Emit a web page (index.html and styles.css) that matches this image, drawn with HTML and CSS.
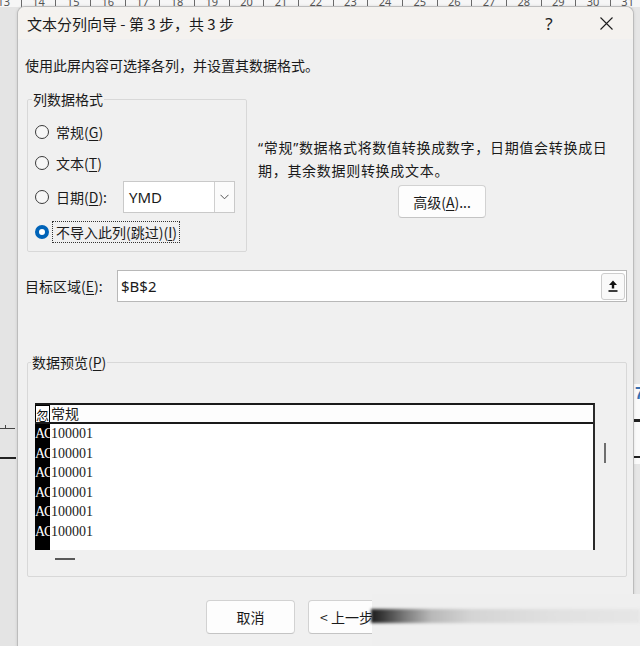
FILE: index.html
```html
<!DOCTYPE html>
<html lang="zh-CN">
<head>
<meta charset="utf-8">
<title>文本分列向导</title>
<link rel="stylesheet" href="styles.css">
</head>
<body>
<div class="ruler">
  <span>13</span><span>14</span><span>15</span><span>16</span><span>17</span><span>18</span><span>19</span><span>20</span><span>21</span><span>22</span><span>23</span><span>24</span><span>25</span><span>26</span><span>27</span><span>28</span><span>29</span><span>30</span><span>31</span>
</div>

<div class="left-strip">
  <div class="ls-tick"></div>
  <div class="ls-line"></div>
</div>
<div class="right-strip">
  <span class="rs-seven">7</span>
  <div class="rs-line"></div>
  <div class="rs-line rs-line2"></div>
</div>

<div class="dialog">
  <div class="titlebar">
    <span class="title">文本分列向导 - 第 3 步，共 3 步</span>
    <span class="help">?</span>
    <span class="close">
      <svg width="13" height="13" viewBox="0 0 13 13"><path d="M0.5 0.5 L12.5 12.5 M12.5 0.5 L0.5 12.5" stroke="#1e1e1e" stroke-width="1.1" fill="none"/></svg>
    </span>
  </div>

  <div class="content">
    <p class="intro">使用此屏内容可选择各列，并设置其数据格式。</p>

    <div class="format-row">
      <fieldset class="group fmt">
        <legend>列数据格式</legend>
        <div class="opts">
          <div class="opt opt1"><span class="radio"></span><span>常规(<u>G</u>)</span></div>
          <div class="opt opt2"><span class="radio"></span><span>文本(<u>T</u>)</span></div>
          <div class="opt opt3"><span class="radio"></span><span class="lbl-date">日期(<u>D</u>):</span>
            <div class="combo">
              <span class="combo-val">YMD</span>
              <span class="combo-btn"><svg width="9" height="6" viewBox="0 0 9 6"><path d="M0.5 0.8 L4.5 4.8 L8.5 0.8" stroke="#555" stroke-width="1" fill="none"/></svg></span>
            </div>
          </div>
          <div class="opt opt4"><span class="radio on"></span><span class="focus">不导入此列(跳过)(<u>I</u>)</span></div>
        </div>
      </fieldset>

      <div class="desc">
        <p><span class="q">“</span>常规<span class="q">”</span>数据格式将数值转换成数字，日期值会转换成日<br>期，其余数据则转换成文本。</p>
        <button class="btn btn-adv">高级(<u>A</u>)...</button>
      </div>
    </div>

    <div class="target">
      <span class="target-lbl">目标区域(<u>E</u>):</span>
      <div class="input">
        <span class="input-val">$B$2</span>
        <span class="collapse">
          <svg width="10" height="13" viewBox="0 0 10 13"><path d="M5 0.5 L9 5 L6.2 5 L6.2 8.5 L3.8 8.5 L3.8 5 L1 5 Z" fill="#111"/><rect x="0.5" y="10.2" width="9" height="1.6" fill="#111"/></svg>
        </span>
      </div>
    </div>

    <fieldset class="group preview">
      <legend>数据预览(<u>P</u>)</legend>
      <div class="pv">
        <div class="pv-main">
          <div class="table">
            <div class="thead"><span class="c1 c1h">忽</span><span class="c2">常规</span></div>
            <div class="tbody">
              <div class="tr"><span class="c1">AC</span><span class="c2">100001</span></div>
              <div class="tr"><span class="c1">AC</span><span class="c2">100001</span></div>
              <div class="tr"><span class="c1">AC</span><span class="c2">100001</span></div>
              <div class="tr"><span class="c1">AC</span><span class="c2">100001</span></div>
              <div class="tr"><span class="c1">AC</span><span class="c2">100001</span></div>
              <div class="tr"><span class="c1">AC</span><span class="c2">100001</span></div>
            </div>
          </div>
          <div class="vscroll"><div class="thumb"></div></div>
        </div>
        <div class="hscroll"></div>
      </div>
    </fieldset>

    <div class="buttons">
      <button class="btn">取消</button>
      <button class="btn btn-prev">&lt; 上一步(<u>B</u>)</button>
    </div>
  </div>
</div>

<div class="smear"><div class="smear-band"></div></div>
</body>
</html>
```
FILE: styles.css
```css
* { box-sizing: border-box; }
html, body { margin: 0; padding: 0; }
body {
  width: 640px;
  height: 646px;
  overflow: hidden;
  position: relative;
  background: #e6e6e6;
  font-family: "Noto Sans CJK SC", "Noto Sans", sans-serif;
  font-size: 14px;
  color: #1a1a1a;
}
u { text-decoration-thickness: 1px; text-underline-offset: 2px; }

/* excel background */
.ruler {
  display: flex;
  height: 7px;
  overflow: hidden;
  background: #f6f6f6;
  margin-left: -13px;
}
.ruler span {
  flex: 0 0 34.67px;
  height: 7px;
  border-right: 1px solid #6a6a6a;
  font-family: "Noto Sans", sans-serif;
  font-size: 11px;
  line-height: 3px;
  color: #555;
  text-align: center;
}
.left-strip {
  position: absolute;
  left: 0;
  top: 7px;
  width: 17px;
  height: 639px;
  background: #e4e4e4;
}
.ls-tick {
  position: absolute;
  left: 0;
  top: 421px;
  width: 15px;
  height: 1px;
  background: #444;
}
.ls-tick::after {
  content: "";
  position: absolute;
  left: 5px;
  top: -3px;
  width: 1px;
  height: 4px;
  background: #444;
}
.ls-line {
  position: absolute;
  left: 0;
  top: 450px;
  width: 16px;
  height: 2px;
  background: #222;
}
.right-strip {
  position: absolute;
  left: 634px;
  top: 384px;
  width: 6px;
  height: 80px;
  background: #fbfbfb;
  overflow: hidden;
}
.rs-seven {
  position: absolute;
  left: 1px;
  top: 2px;
  font: bold 16px/1 "Liberation Sans", sans-serif;
  color: #3a6fb0;
}
.rs-line {
  position: absolute;
  left: 0;
  top: 35px;
  width: 6px;
  height: 3px;
  background: #222;
}
.rs-line2 { top: 72px; height: 2px; }

/* dialog */
.dialog {
  position: absolute;
  left: 17px;
  top: 6px;
  width: 617px;
  height: 660px;
  background: #f0f0f0;
  border: 1px solid #bcbcbc;
  border-bottom: none;
  border-radius: 8px 8px 0 0;
  overflow: hidden;
  box-shadow: 0 0 3px rgba(0,0,0,0.12);
}
.titlebar {
  display: flex;
  align-items: center;
  height: 32px;
  padding: 0 4px 0 9px;
  background: #f4f2ef;
}
.title { font-size: 15px; color: #1a1a1a; }
.help {
  margin-left: auto;
  width: 46px;
  text-align: center;
  font-family: "Noto Sans", sans-serif;
  font-size: 17px;
  color: #222;
}
.close {
  width: 46px;
  margin-left: 11px;
  display: flex;
  justify-content: center;
  align-items: center;
}

.content { padding: 16px 6px 0 7px; }
.intro { margin: 0; line-height: 20px; }

.format-row {
  display: flex;
  align-items: flex-start;
  margin-top: 14px;
}
.group {
  margin: 0 0 0 2px;
  padding: 0;
  min-width: 0;
  border: 1px solid #d8d8d8;
  border-radius: 2px;
}
.group legend {
  padding: 0 1px;
  line-height: 20px;
  font-size: 14px;
}
.fmt { width: 220px; flex: none; }
.fmt legend { margin-left: 4px; }
.opts { padding: 8px 0 2px 7px; }
.opt { display: flex; align-items: center; }
.opt1 { height: 30px; }
.opt2 { height: 32px; }
.opt3 { height: 36px; }
.opt4 { height: 34px; }
.radio {
  flex: none;
  width: 14px;
  height: 14px;
  border-radius: 50%;
  border: 1px solid #3a3a3a;
  background: #f7f7f7;
  margin-right: 7px;
}
.radio.on {
  border: 4px solid #0063b8;
  background: #fff;
}
.lbl-date { width: 67px; flex: none; }
.combo {
  display: flex;
  width: 112px;
  height: 32px;
  background: #fff;
  border: 1px solid #c9c9c9;
}
.combo-val {
  flex: 1;
  padding-left: 5px;
  line-height: 30px;
  font-family: "Noto Sans", sans-serif;
  font-size: 15px;
}
.combo-btn {
  width: 20px;
  border-left: 1px solid #cfcfcf;
  background: #fbfbfb;
  display: flex;
  align-items: center;
  justify-content: center;
}
.focus {
  border: 1px dotted #333;
  height: 22px;
  line-height: 20px;
  padding: 0 2px 0 3px;
  margin-left: -4px;
}

.desc {
  margin-left: 11px;
  padding-top: 47px;
  width: 362px;
}
.desc p { margin: 0; line-height: 22px; letter-spacing: 0.7px; }
.q { font-family: "Noto Sans", sans-serif; }

.btn {
  font-family: "Noto Sans CJK SC", "Noto Sans", sans-serif;
  font-size: 14px;
  color: #1a1a1a;
  background: #fdfdfd;
  border: 1px solid #d2d2d2;
  border-bottom-color: #c4c4c4;
  border-radius: 4px;
  padding: 0;
}
.btn-adv {
  display: block;
  margin: 4px 0 0 140px;
  width: 88px;
  height: 33px;
}

.target {
  display: flex;
  align-items: center;
  height: 32px;
  margin-top: 18px;
}
.target-lbl { width: 92px; flex: none; }
.input {
  flex: 1;
  height: 32px;
  display: flex;
  align-items: center;
  background: #fff;
  border: 1px solid #b8b8b8;
  padding-left: 3px;
}
.input-val {
  font-family: "Noto Sans", sans-serif;
  font-size: 15px;
}
.collapse {
  margin-left: auto;
  margin-right: 1px;
  width: 24px;
  height: 27px;
  border: 1px solid #cdcdcd;
  border-radius: 3px;
  background: #f9f9f9;
  display: flex;
  align-items: center;
  justify-content: center;
}

.preview { margin-top: 50px; }
.preview legend { margin-left: 3px; }
.pv { padding: 31px 0 16px 7px; }
.pv-main { display: flex; }
.table {
  width: 560px;
  height: 147px;
  border-top: 2px solid #1a1a1a;
  border-right: 2px solid #2a2a2a;
  background: linear-gradient(to right, #000 15px, #fff 15px);
  font-family: "Liberation Serif", "Noto Sans CJK SC", serif;
  font-size: 14px;
}
.thead {
  display: flex;
  height: 19px;
  background: #fdfdfd;
  border-bottom: 2px solid #1a1a1a;
  line-height: 17px;
}
.thead .c2 { font-family: "Noto Sans CJK SC", sans-serif; }
.c1 {
  flex: none;
  width: 15px;
  overflow: hidden;
  white-space: nowrap;
  color: #fff;
  letter-spacing: -1px;
}
.c1h {
  color: #111;
  background: #fff;
  border: 1px solid #000;
  border-bottom: none;
  font-family: "Noto Sans CJK SC", sans-serif;
  font-size: 13px;
  letter-spacing: 0;
}
.c2 { padding-left: 1px; }
.tr {
  display: flex;
  height: 19.5px;
  line-height: 19.5px;
}
.vscroll { flex: 1; }
.thumb {
  margin: 40px 0 0 9px;
  width: 2px;
  height: 20px;
  background: #6e6e6e;
}
.hscroll {
  margin: 8px 0 0 20px;
  width: 20px;
  height: 2px;
  background: #585858;
}

.buttons {
  display: flex;
  gap: 13px;
  margin-top: 23px;
  padding-left: 181px;
}
.buttons .btn { width: 89px; height: 34px; }
.buttons .btn-prev { text-align: left; padding-left: 11px; }

/* smudged-out part of the screenshot */
.smear {
  position: absolute;
  left: 372px;
  top: 594px;
  width: 268px;
  height: 52px;
  background: #efefef;
}
.smear-band {
  position: absolute;
  left: -1px;
  right: 0;
  top: 15px;
  height: 14px;
  background: linear-gradient(to right, #1c1c1c 0, #353535 10px, #7d7d7d 35px, #b8b8b8 60px, #d4d4d4 100px, #e0e0e0 180px, #e6e6e6 100%);
  filter: blur(1.5px);
}
```
